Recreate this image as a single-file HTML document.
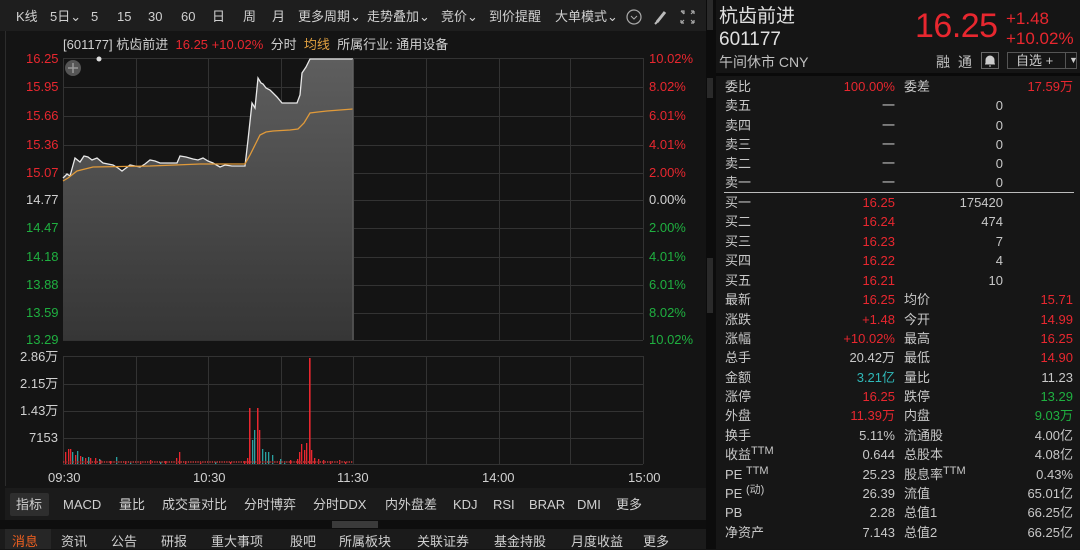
<!DOCTYPE html>
<html><head><meta charset="utf-8"><style>
*{margin:0;padding:0;box-sizing:border-box}
body{width:1080px;height:549px;overflow:hidden;background:#141414;font-family:"Liberation Sans","Noto Sans CJK SC",sans-serif;color:#c8c8c8;position:relative;font-size:13px;line-height:16px}
.a{position:absolute;white-space:nowrap;line-height:16px}
.r{color:#e8272f}.g{color:#1fb040}.c{color:#2fb8b8}.y{color:#e0a040}.w{color:#d0d0d0}
.tb span{position:absolute;top:9px;font-size:13px;color:#d0d0d0;line-height:16px}
.lbl{position:absolute;font-size:13px;line-height:14px}
.rp .row{position:absolute;left:725px;width:350px;height:19px;font-size:13px;line-height:19px}
.rp .row b{font-weight:normal;position:absolute;line-height:19px}
sup{line-height:0;vertical-align:5px}
</style></head><body>
<div class="a" style="left:0;top:0;width:706px;height:31px;background:#1e1e1e"></div>
<div class="a" style="left:5px;top:31px;width:1px;height:455px;background:#2c2c2c"></div>
<div class="tb">
<span style="left:16px">K线</span><span style="left:50px">5日⌄</span><span style="left:91px">5</span><span style="left:117px">15</span><span style="left:148px">30</span><span style="left:181px">60</span><span style="left:212px">日</span><span style="left:243px">周</span><span style="left:272px">月</span><span style="left:298px">更多周期⌄</span><span style="left:367px">走势叠加⌄</span><span style="left:441px">竞价⌄</span><span style="left:489px">到价提醒</span><span style="left:555px">大单模式⌄</span>
</div>
<svg class="a" style="left:626px;top:8px" width="80" height="18"><circle cx="8" cy="9" r="7" fill="none" stroke="#aaa" stroke-width="1.2"/><path d="M5 8l3 3 3-3" fill="none" stroke="#aaa"/><path d="M31 14l8-10" stroke="#bbb" stroke-width="3"/><path d="M29 16l3-3" stroke="#bbb" stroke-width="2"/><path d="M55 3h3v3M55 3l3 3M68 3h-3M68 3v3M68 3l-3 3M55 15h3M55 15v-3M55 15l3-3M68 15h-3M68 15v-3M68 15l-3-3" fill="none" stroke="#aaa" stroke-width="1.2"/></svg>
<div class="a" style="left:63px;top:37px;font-size:13px"><span class="w">[601177] 杭齿前进</span>&nbsp; <span class="r">16.25 +10.02%</span>&nbsp; <span class="w">分时</span>&nbsp; <span class="y">均线</span>&nbsp; <span class="w">所属行业: 通用设备</span></div>
<svg class="a" style="left:0;top:0" width="706" height="490">
<defs><linearGradient id="gf" x1="0" y1="0" x2="0" y2="1"><stop offset="0" stop-color="#5e5e5e"/><stop offset="1" stop-color="#363636"/></linearGradient></defs>
<g stroke="#333" stroke-width="1">
<path d="M63 58.5H643M63 87.5H643M63 116.5H643M63 145.5H643M63 173.5H643M63 200.5H643M63 228.5H643M63 257.5H643M63 285.5H643M63 313.5H643M63 340.5H643"/>
<path d="M63.5 58V340M136.5 58V340M208.5 58V340M281.5 58V340M353.5 58V340M426.5 58V340M499.5 58V340M570.5 58V340M643.5 58V340"/>
<path d="M63 356.5H643M63 384.5H643M63 411.5H643M63 438.5H643M63 464.5H643"/>
<path d="M63.5 356V464M136.5 356V464M208.5 356V464M281.5 356V464M353.5 356V464M426.5 356V464M499.5 356V464M570.5 356V464M643.5 356V464"/>
</g>
<path d="M63 178L67 174L70 176L75 158L80 162L84 156L88 157L92 160L97 158L103 163L108 164L113 165L118 168L122 171L126 168L130 165L135 166L140 167L145 164L150 160L155 161L160 163L170 163L177 163L180 156L186 157L193 159L198 160L203 158L208 161L213 163L220 167L225 165L232 166L245 166L248 140L252 103L255 108L258 78L261 83L263 84L266 88L270 90L273 93L277 97L282 103L290 103L297 103L300 95L302 73L306 67L310 59L353 59L353 340L63 340Z" fill="url(#gf)"/>
<path d="M63 178L67 174L70 176L75 158L80 162L84 156L88 157L92 160L97 158L103 163L108 164L113 165L118 168L122 171L126 168L130 165L135 166L140 167L145 164L150 160L155 161L160 163L170 163L177 163L180 156L186 157L193 159L198 160L203 158L208 161L213 163L220 167L225 165L232 166L245 166L248 140L252 103L255 108L258 78L261 83L263 84L266 88L270 90L273 93L277 97L282 103L290 103L297 103L300 95L302 73L306 67L310 59L353 59" fill="none" stroke="#e8e8e8" stroke-width="1.3"/>
<path d="M63 181L68 178L77 171L85 169L93 167L150 166L200 164L245 164L250 155L256 143L260 135L266 132L273 131L290 130L298 129L304 123L310 113L318 112L327 111L340 110L353 109" fill="none" stroke="#e09a3a" stroke-width="1.3"/>
<line x1="353" y1="59" x2="353" y2="340" stroke="#666"/>
<circle cx="73" cy="68" r="8" fill="#555"/><path d="M68 68h10M73 63v10" stroke="#999" stroke-width="1.5"/>
<circle cx="99" cy="59" r="2.5" fill="#ddd"/>
<g fill="#e8272f">
<rect x="65" y="452" width="1.3" height="12"/><rect x="68" y="449" width="1.3" height="15"/><rect x="70" y="449" width="1.3" height="15"/><rect x="75" y="455" width="1.3" height="9"/><rect x="80" y="456" width="1.3" height="8"/><rect x="85" y="458" width="1.3" height="6"/><rect x="90" y="458" width="1.3" height="6"/><rect x="95" y="458" width="1.3" height="6"/><rect x="100" y="460" width="1.3" height="4"/><rect x="110" y="461" width="1.3" height="3"/><rect x="125" y="461" width="1.3" height="3"/><rect x="140" y="461" width="1.3" height="3"/><rect x="150" y="460" width="1.3" height="4"/><rect x="165" y="461" width="1.3" height="3"/><rect x="176" y="458" width="1.3" height="6"/><rect x="179" y="452" width="1.3" height="12"/><rect x="185" y="461" width="1.3" height="3"/><rect x="200" y="462" width="1.3" height="2"/><rect x="230" y="462" width="1.3" height="2"/><rect x="244" y="461" width="1.3" height="3"/><rect x="247" y="458" width="1.3" height="6"/><rect x="249" y="408" width="1.5" height="56"/><rect x="257" y="408" width="1.5" height="56"/><rect x="259" y="430" width="1.3" height="34"/><rect x="279" y="462" width="1.3" height="2"/><rect x="290" y="460" width="1.3" height="4"/><rect x="297" y="459" width="1.3" height="5"/><rect x="299" y="452" width="1.3" height="12"/><rect x="301" y="444" width="1.3" height="20"/><rect x="304" y="450" width="1.3" height="14"/><rect x="306" y="443" width="1.3" height="21"/><rect x="309" y="358" width="1.6" height="106"/><rect x="311" y="450" width="1.3" height="14"/><rect x="314" y="458" width="1.3" height="6"/><rect x="318" y="459" width="1.3" height="5"/><rect x="323" y="460" width="1.3" height="4"/><rect x="330" y="461" width="1.3" height="3"/><rect x="339" y="460" width="1.3" height="4"/><rect x="345" y="462" width="1.3" height="2"/>
</g>
<g fill="#2aa0a0">
<rect x="72" y="452" width="1.3" height="12"/><rect x="77" y="451" width="1.3" height="13"/><rect x="82" y="457" width="1.3" height="7"/><rect x="88" y="457" width="1.3" height="7"/><rect x="99" y="459" width="1.3" height="5"/><rect x="116" y="457" width="1.3" height="7"/><rect x="130" y="462" width="1.3" height="2"/><rect x="160" y="462" width="1.3" height="2"/><rect x="215" y="462" width="1.3" height="2"/><rect x="252" y="440" width="1.3" height="24"/><rect x="254" y="430" width="1.3" height="34"/><rect x="262" y="449" width="1.3" height="15"/><rect x="265" y="452" width="1.3" height="12"/><rect x="268" y="452" width="1.3" height="12"/><rect x="272" y="455" width="1.3" height="9"/><rect x="280" y="459" width="1.3" height="5"/><rect x="284" y="461" width="1.3" height="3"/>
</g>
<path d="M63 462H353" stroke="#a03030" stroke-width="2" stroke-dasharray="1.3 1.1"/>
</svg>
<div class="lbl r" style="left:26px;top:52px">16.25</div>
<div class="lbl r" style="left:26px;top:80px">15.95</div>
<div class="lbl r" style="left:26px;top:109px">15.66</div>
<div class="lbl r" style="left:26px;top:138px">15.36</div>
<div class="lbl r" style="left:26px;top:166px">15.07</div>
<div class="lbl w" style="left:26px;top:193px">14.77</div>
<div class="lbl g" style="left:26px;top:221px">14.47</div>
<div class="lbl g" style="left:26px;top:250px">14.18</div>
<div class="lbl g" style="left:26px;top:278px">13.88</div>
<div class="lbl g" style="left:26px;top:306px">13.59</div>
<div class="lbl g" style="left:26px;top:333px">13.29</div>
<div class="lbl r" style="left:649px;top:52px">10.02%</div>
<div class="lbl r" style="left:649px;top:80px">8.02%</div>
<div class="lbl r" style="left:649px;top:109px">6.01%</div>
<div class="lbl r" style="left:649px;top:138px">4.01%</div>
<div class="lbl r" style="left:649px;top:166px">2.00%</div>
<div class="lbl w" style="left:649px;top:193px">0.00%</div>
<div class="lbl g" style="left:649px;top:221px">2.00%</div>
<div class="lbl g" style="left:649px;top:250px">4.01%</div>
<div class="lbl g" style="left:649px;top:278px">6.01%</div>
<div class="lbl g" style="left:649px;top:306px">8.02%</div>
<div class="lbl g" style="left:649px;top:333px">10.02%</div>
<div class="lbl w" style="left:20px;top:350px">2.86万</div>
<div class="lbl w" style="left:20px;top:377px">2.15万</div>
<div class="lbl w" style="left:20px;top:404px">1.43万</div>
<div class="lbl w" style="left:29px;top:431px">7153</div>
<div class="lbl w" style="left:48px;top:471px">09:30</div>
<div class="lbl w" style="left:193px;top:471px">10:30</div>
<div class="lbl w" style="left:337px;top:471px">11:30</div>
<div class="lbl w" style="left:482px;top:471px">14:00</div>
<div class="lbl w" style="left:628px;top:471px">15:00</div>
<div class="a" style="left:5px;top:488px;width:701px;height:32px;background:#1b1b1b"></div>
<div class="a" style="left:10px;top:493px;width:39px;height:23px;background:#2e2e2e;border-radius:2px"></div>
<div class="a w" style="top:497px;left:0;font-size:13px;width:700px;height:16px">
<span class="a" style="left:16px">指标</span><span class="a" style="left:63px">MACD</span><span class="a" style="left:119px">量比</span><span class="a" style="left:162px">成交量对比</span><span class="a" style="left:244px">分时博弈</span><span class="a" style="left:313px">分时DDX</span><span class="a" style="left:385px">内外盘差</span><span class="a" style="left:453px">KDJ</span><span class="a" style="left:493px">RSI</span><span class="a" style="left:529px">BRAR</span><span class="a" style="left:577px">DMI</span><span class="a" style="left:616px">更多</span>
</div>
<div class="a" style="left:0;top:520px;width:706px;height:9px;background:#0e0e0e"></div>
<div class="a" style="left:332px;top:521px;width:46px;height:7px;background:#3a3a3a"></div>
<div class="a" style="left:0;top:529px;width:706px;height:20px;background:#1b1b1b"></div>
<div class="a" style="left:5px;top:529px;width:46px;height:20px;background:#262626"></div>
<div class="a w" style="top:534px;left:0;font-size:13px;width:700px;height:16px">
<span class="a" style="left:12px;color:#f06020">消息</span><span class="a" style="left:61px">资讯</span><span class="a" style="left:111px">公告</span><span class="a" style="left:161px">研报</span><span class="a" style="left:211px">重大事项</span><span class="a" style="left:290px">股吧</span><span class="a" style="left:339px">所属板块</span><span class="a" style="left:417px">关联证券</span><span class="a" style="left:494px">基金持股</span><span class="a" style="left:571px">月度收益</span><span class="a" style="left:643px">更多</span>
</div>
<div class="a" style="left:706px;top:0;width:10px;height:549px;background:#0c0c0c"></div>
<div class="a" style="left:707px;top:0;width:6px;height:30px;background:#2a2a2a"></div>
<div class="a" style="left:707px;top:78px;width:6px;height:20px;background:#2a2a2a"></div>
<div class="a" style="left:707px;top:258px;width:6px;height:55px;background:#2a2a2a"></div>
<div class="a" style="left:716px;top:0;width:364px;height:73px;background:#151515"></div>
<div class="a" style="left:716px;top:73px;width:364px;height:3px;background:#0a0a0a"></div>
<div class="a" style="left:716px;top:76px;width:364px;height:473px;background:#161616"></div>
<div class="a" style="left:719px;top:6px;font-size:19px;line-height:22px;color:#e0e0e0">杭齿前进</div>
<div class="a" style="left:719px;top:29px;font-size:19px;line-height:22px;color:#e0e0e0">601177</div>
<div class="a" style="left:719px;top:54px;font-size:14px;color:#c0c0c0">午间休市 CNY</div>
<div class="a r" style="left:915px;top:7px;font-size:34px;line-height:38px;letter-spacing:-.5px">16.25</div>
<div class="a r" style="left:1006px;top:9px;font-size:17px;line-height:20px">+1.48</div>
<div class="a r" style="left:1006px;top:29px;font-size:17px;line-height:20px">+10.02%</div>
<div class="a" style="left:936px;top:54px;font-size:14px;color:#c0c0c0">融</div>
<div class="a" style="left:958px;top:54px;font-size:14px;color:#c0c0c0">通</div>
<div class="a" style="left:981px;top:52px;width:18px;height:17px;border:1px solid #666"><svg width="16" height="15"><path d="M4 11V7a4 4 0 0 1 8 0v4zM3 11h10M7 13h2" fill="#ccc" stroke="#ccc"/></svg></div>
<div class="a" style="left:1007px;top:52px;width:70px;height:17px;border:1px solid #555;font-size:13px;line-height:15px;color:#ccc;padding-left:8px">自选 +<span style="position:absolute;left:57px;top:0;border-left:1px solid #555;padding-left:3px;font-size:9px">▼</span></div>
<div class="rp">
<div class="row" style="top:77px"><b>委比</b><b class="r" style="right:180px">100.00%</b><b style="left:179px">委差</b><b class="r" style="right:2px">17.59万</b></div>
<div class="row" style="top:96px"><b>卖五</b><b style="right:180px">一</b><b style="right:72px">0</b></div>
<div class="row" style="top:116px"><b>卖四</b><b style="right:180px">一</b><b style="right:72px">0</b></div>
<div class="row" style="top:135px"><b>卖三</b><b style="right:180px">一</b><b style="right:72px">0</b></div>
<div class="row" style="top:154px"><b>卖二</b><b style="right:180px">一</b><b style="right:72px">0</b></div>
<div class="row" style="top:173px"><b>卖一</b><b style="right:180px">一</b><b style="right:72px">0</b></div>
<div class="a" style="left:724px;top:192px;width:350px;height:1px;background:#bbb"></div>
<div class="row" style="top:193px"><b>买一</b><b class="r" style="right:180px">16.25</b><b style="right:72px">175420</b></div>
<div class="row" style="top:212px"><b>买二</b><b class="r" style="right:180px">16.24</b><b style="right:72px">474</b></div>
<div class="row" style="top:232px"><b>买三</b><b class="r" style="right:180px">16.23</b><b style="right:72px">7</b></div>
<div class="row" style="top:251px"><b>买四</b><b class="r" style="right:180px">16.22</b><b style="right:72px">4</b></div>
<div class="row" style="top:271px"><b>买五</b><b class="r" style="right:180px">16.21</b><b style="right:72px">10</b></div>
<div class="row" style="top:290px"><b>最新</b><b class="r" style="right:180px">16.25</b><b style="left:179px">均价</b><b class="r" style="right:2px">15.71</b></div>
<div class="row" style="top:310px"><b>涨跌</b><b class="r" style="right:180px">+1.48</b><b style="left:179px">今开</b><b class="r" style="right:2px">14.99</b></div>
<div class="row" style="top:329px"><b>涨幅</b><b class="r" style="right:180px">+10.02%</b><b style="left:179px">最高</b><b class="r" style="right:2px">16.25</b></div>
<div class="row" style="top:348px"><b>总手</b><b style="right:180px">20.42万</b><b style="left:179px">最低</b><b class="r" style="right:2px">14.90</b></div>
<div class="row" style="top:368px"><b>金额</b><b class="c" style="right:180px">3.21亿</b><b style="left:179px">量比</b><b style="right:2px">11.23</b></div>
<div class="row" style="top:387px"><b>涨停</b><b class="r" style="right:180px">16.25</b><b style="left:179px">跌停</b><b class="g" style="right:2px">13.29</b></div>
<div class="row" style="top:406px"><b>外盘</b><b class="r" style="right:180px">11.39万</b><b style="left:179px">内盘</b><b class="g" style="right:2px">9.03万</b></div>
<div class="row" style="top:426px"><b>换手</b><b style="right:180px">5.11%</b><b style="left:179px">流通股</b><b style="right:2px">4.00亿</b></div>
<div class="row" style="top:445px"><b>收益<sup style="font-size:11px">TTM</sup></b><b style="right:180px">0.644</b><b style="left:179px">总股本</b><b style="right:2px">4.08亿</b></div>
<div class="row" style="top:465px"><b>PE <sup style="font-size:11px">TTM</sup></b><b style="right:180px">25.23</b><b style="left:179px">股息率<sup style="font-size:11px">TTM</sup></b><b style="right:2px">0.43%</b></div>
<div class="row" style="top:484px"><b>PE <sup style="font-size:11px">(动)</sup></b><b style="right:180px">26.39</b><b style="left:179px">流值</b><b style="right:2px">65.01亿</b></div>
<div class="row" style="top:503px"><b>PB</b><b style="right:180px">2.28</b><b style="left:179px">总值1</b><b style="right:2px">66.25亿</b></div>
<div class="row" style="top:523px"><b>净资产</b><b style="right:180px">7.143</b><b style="left:179px">总值2</b><b style="right:2px">66.25亿</b></div>
</div>
</body></html>
